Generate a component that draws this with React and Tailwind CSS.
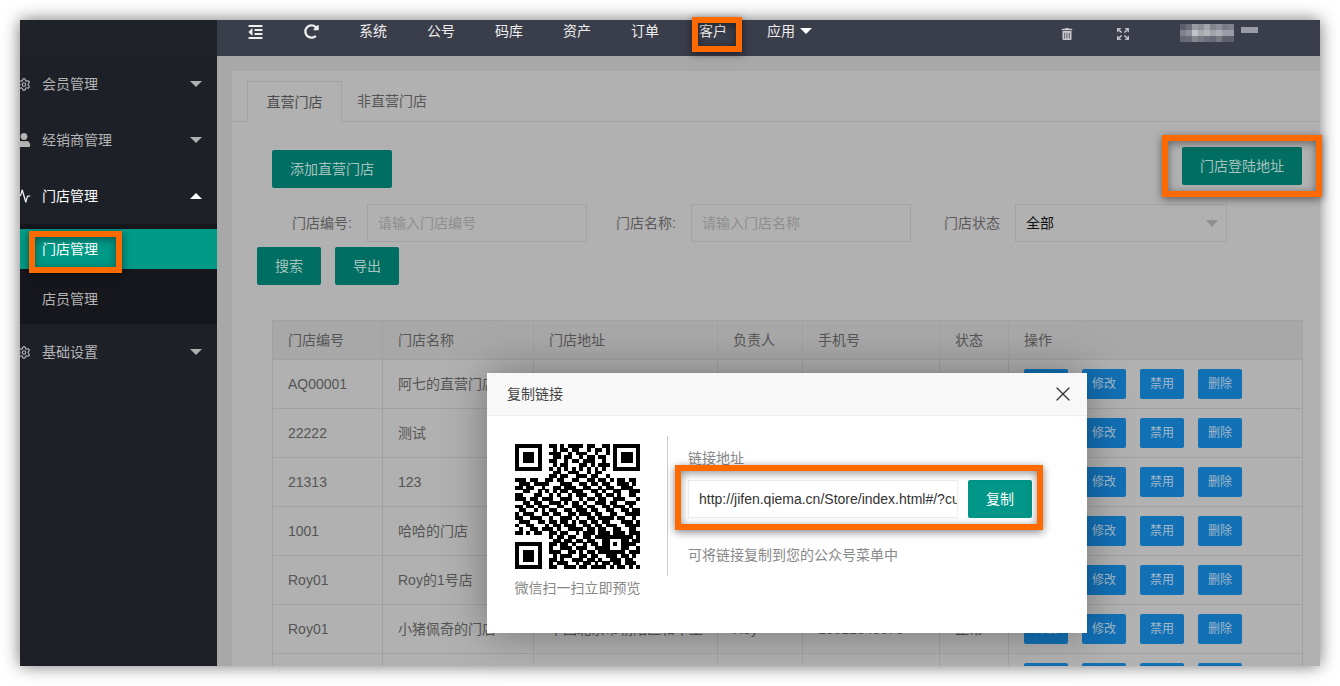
import { Settings, Activity, X, Expand } from 'lucide-react'
import { FaUser, FaOutdent, FaRedoAlt, FaTrashAlt } from 'react-icons/fa'

const FONT = 'font-["Liberation_Sans","Noto_Sans_CJK_SC",sans-serif]'

const QR_ROWS = [
  '000000000110101111011001100000000',
  '000000000010110110010110100000000',
  '000000000111001011100100110000000',
  '000000000011011001011011000000000',
  '000000000110010110111001010000000',
  '000000000010110001101011100000000',
  '000000000101010101010101000000000',
  '000000000011001110010110000000000',
  '000000000110110011101100100000000',
  '111011001101100110011011010110110',
  '011101111000111001101101100111010',
  '110110010011011100110010110011100',
  '001100101010110111001101001100111',
  '110001100101001011100110110100110',
  '111011011100111001011011001110001',
  '001101100111010110100111011001110',
  '110110111001100111011001101110100',
  '011001010110011011101100110011011',
  '101110011011001101110110011001111',
  '110011100100111010011011110110010',
  '011100110110110101101101100011101',
  '100110001011011100110110111001111',
  '010011011101001111011011001100110',
  '110101100110110010111011101110111',
  '000000000101101100110111000001101',
  '000000000011011011011001000001011',
  '000000000110110100101101000001110',
  '000000000100111011100111000001001',
  '000000000111001101011011000000111',
  '000000000010111001101100111011010',
  '000000000110100111011010011101100',
  '000000000101110010110101101101110',
  '000000000110011101101111010110101',
]

function qrCell(r, c) {
  const finder = (x, y) => {
    if (x < 0 || y < 0 || x > 7 || y > 7) return null
    if (x === 7 || y === 7) return false
    return x === 0 || x === 6 || y === 0 || y === 6 || (x >= 2 && x <= 4 && y >= 2 && y <= 4)
  }
  const a = finder(c, r)
  if (a !== null) return a
  const b = finder(32 - c, r)
  if (b !== null) return b
  const d = finder(c, 32 - r)
  if (d !== null) return d
  // alignment block, bottom right
  if (r >= 24 && r <= 28 && c >= 24 && c <= 28) {
    return r === 24 || r === 28 || c === 24 || c === 28 || (r === 26 && c === 26)
  }
  return QR_ROWS[r][c] === '1'
}

function QrCode() {
  const cells = []
  for (let r = 0; r < 33; r++) {
    for (let c = 0; c < 33; c++) {
      if (qrCell(r, c)) cells.push(<rect key={r + '-' + c} x={c} y={r} width="1.02" height="1.02" fill="#000" />)
    }
  }
  return (
    <svg width="125" height="125" viewBox="0 0 33 33" shapeRendering="crispEdges">
      {cells}
    </svg>
  )
}

// pixelated user name in the top bar
function Mosaic() {
  const cols = [
    ['#5c5f6b', '#7f818b', '#666975'],
    ['#6b6d78', '#8f909a', '#6a6c77'],
    ['#9a9ba3', '#c2c3c8', '#82848e'],
    ['#8d8e97', '#a9aab1', '#777983'],
    ['#a4a5ac', '#b3b4ba', '#6f717c'],
    ['#82848e', '#a1a2aa', '#676974'],
    ['#8f909a', '#adaeb5', '#777983'],
    ['#787a85', '#9c9da5', '#5e606c'],
    ['#7f818b', '#9a9ba3', '#5e606c'],
  ]
  return (
    <svg width="67" height="18" viewBox="0 0 9 3" shapeRendering="crispEdges">
      {cols.map((col, x) => col.map((fill, y) => (
        <rect key={x + '-' + y} x={x} y={y} width="1" height="1" fill={fill} />
      )))}
    </svg>
  )
}

function Caret({ up, dim }) {
  return (
    <span
      className={
        up
          ? 'block w-0 h-0 border-x-[6px] border-x-transparent border-b-[6px] border-b-white'
          : dim
            ? 'block w-0 h-0 border-x-[6px] border-x-transparent border-t-[6px] border-t-[#b0b0b0]'
            : 'block w-0 h-0 border-x-[6px] border-x-transparent border-t-[6px] border-t-white'
      }
    />
  )
}

function MenuItem({ icon, label, open }) {
  return (
    <div className={'h-[56px] flex items-center shrink-0 ' + (open ? 'text-white' : 'text-[#b4b4b4]')}>
      <span className="w-[14px] -ml-[3px] mr-[11px] flex justify-center">{icon}</span>
      <span className="flex-1 text-sm">{label}</span>
      <span className="mr-[15px]"><Caret up={open} dim={!open} /></span>
    </div>
  )
}

function Sidebar() {
  return (
    <div className="w-[197px] shrink-0 bg-[#1e2028] flex flex-col">
      <div className="h-[36px] bg-[#202229] shrink-0" />
      <MenuItem icon={<Settings size={15} />} label="会员管理" />
      <MenuItem icon={<FaUser size={14} />} label="经销商管理" />
      <MenuItem icon={<Activity size={14} />} label="门店管理" open />
      <div className="bg-[#16171c] shrink-0 h-[100px]">
        <div className="h-[5px]" />
        <div className="h-[40px] bg-[#009a87] flex items-center pl-[22px] text-sm text-white">门店管理</div>
        <div className="h-[5px]" />
        <div className="h-[50px] flex items-center pl-[22px] text-sm text-[#b4b4b4]">店员管理</div>
      </div>
      <MenuItem icon={<Settings size={15} />} label="基础设置" />
    </div>
  )
}

function TopBar() {
  const links = ['系统', '公号', '码库', '资产', '订单', '客户']
  return (
    <div className="h-[36px] shrink-0 bg-[#3a3d4a] flex items-start pt-[1px] pl-[30px] pr-[62px] text-[#eeeeee] text-sm">
      <div className="flex items-center gap-[40px] h-[21px]">
        <FaOutdent size={16} className="w-[17px]" />
        <FaRedoAlt size={15} />
        {links.map(l => <span key={l} className="mb-[2px]">{l}</span>)}
        <span className="flex items-center gap-[5px] mb-[2px]">应用<Caret /></span>
      </div>
      <div className="ml-auto flex items-center h-[23px]">
        <FaTrashAlt size={12} className="text-[#c8c8cc] mt-[2px]" />
        <Expand size={14} className="ml-[43px] mt-[2px] text-[#d8d8dc]" />
        <span className="ml-[43px]"><Mosaic /></span>
        <span className="block w-[17px] h-[6px] bg-[#9a9ca5] ml-[1px] mb-[6px]" />
      </div>
    </div>
  )
}

const ROWS = [
  ['AQ00001', '阿七的直营门店', '北京市朝阳区', 'Roy', '18512345678', '正常'],
  ['22222', '测试', '北京市海淀区', 'Roy', '18512345678', '正常'],
  ['21313', '123', '北京市东城区', 'Roy', '18512345678', '正常'],
  ['1001', '哈哈的门店', '北京市西城区', 'Roy', '18512345678', '正常'],
  ['Roy01', 'Roy的1号店', '北京市丰台区', 'Roy', '18512345678', '正常'],
  ['Roy01', '小猪佩奇的门店', '中国北京市朝阳区和平里', 'Roy', '18512345678', '正常'],
  ['', '', '', '', '', ''],
]

function ActionButton({ children }) {
  return (
    <button className="w-[44px] h-[30px] shrink-0 rounded-[2px] bg-[#1270b5] text-[#a3b9c9] text-xs">{children}</button>
  )
}

function StoreTable() {
  const cell = 'border border-[#a2a2a2] px-[15px] align-middle font-normal text-left'
  return (
    <table className="w-[1030px] table-fixed border-collapse text-sm text-[#555555]">
      <colgroup>
        <col className="w-[110px]" />
        <col className="w-[151px]" />
        <col className="w-[184px]" />
        <col className="w-[85px]" />
        <col className="w-[137px]" />
        <col className="w-[69px]" />
        <col className="w-[294px]" />
      </colgroup>
      <thead>
        <tr className="h-[39px] bg-[#a8a8a8]">
          {['门店编号', '门店名称', '门店地址', '负责人', '手机号', '状态', '操作'].map(h => (
            <th key={h} className={cell}>{h}</th>
          ))}
        </tr>
      </thead>
      <tbody>
        {ROWS.map((row, i) => (
          <tr key={i} className="h-[49px]">
            {row.map((v, j) => <td key={j} className={cell + ' whitespace-nowrap overflow-hidden'}>{v}</td>)}
            <td className={cell}>
              {/* last row is cut by the window, only the button tops show */}
              {row[0] ? (
                <div className="flex gap-[14px]">
                  <ActionButton>详情</ActionButton>
                  <ActionButton>修改</ActionButton>
                  <ActionButton>禁用</ActionButton>
                  <ActionButton>删除</ActionButton>
                </div>
              ) : (
                <div className="flex gap-[14px]">
                  <ActionButton />
                  <ActionButton />
                  <ActionButton />
                  <ActionButton />
                </div>
              )}
            </td>
          </tr>
        ))}
      </tbody>
    </table>
  )
}

function Field({ label, placeholder }) {
  return (
    <>
      <label className="w-[80px] shrink-0 text-right text-sm text-[#5a5a5a]">{label}</label>
      <div className="w-[220px] h-[38px] ml-[15px] shrink-0 border border-[#a4a4a4] flex items-center pl-[10px] text-sm text-[#8e8e8e]">
        {placeholder}
      </div>
    </>
  )
}

function Content() {
  return (
    <div className="flex-1 min-h-0 bg-[#a8a8a8] pt-[15px] pl-[15px]">
      <div className="h-full bg-[#b1b1b1] overflow-hidden pt-[10px]">
        <div className="flex h-[41px] border-b border-[#a2a2a2] text-sm pl-[15px]">
          <div className="w-[95px] h-[41px] border border-[#a2a2a2] border-b-[#b1b1b1] flex items-center justify-center text-[#4a4a4a]">直营门店</div>
          <div className="px-[15px] flex items-center text-[#555555]">非直营门店</div>
        </div>
        <div className="relative pl-[40px] pt-[28px]">
          <button className="block w-[120px] h-[38px] rounded-[2px] bg-[#006e62] text-sm text-[#a5c3bf]">添加直营门店</button>
          <button className="absolute top-[25px] right-[18px] w-[120px] h-[38px] rounded-[2px] bg-[#006e62] text-sm text-[#a5c3bf]">门店登陆地址</button>
        </div>
        <div className="flex items-center mt-[16px] pl-[40px]">
          <Field label="门店编号:" placeholder="请输入门店编号" />
          <span className="w-[9px] shrink-0" />
          <Field label="门店名称:" placeholder="请输入门店名称" />
          <span className="w-[9px] shrink-0" />
          <label className="w-[80px] shrink-0 text-right text-sm text-[#5a5a5a]">门店状态</label>
          <div className="w-[212px] h-[38px] ml-[15px] shrink-0 border border-[#a4a4a4] flex items-center justify-between pl-[10px] pr-[8px] text-sm text-[#111111]">
            全部
            <span className="block w-0 h-0 border-x-[6px] border-x-transparent border-t-[7px] border-t-[#8e8e8e]" />
          </div>
        </div>
        <div className="flex gap-[14px] mt-[5px] pl-[25px]">
          <button className="w-[64px] h-[38px] rounded-[2px] bg-[#006e62] text-sm text-[#a5c3bf]">搜索</button>
          <button className="w-[64px] h-[38px] rounded-[2px] bg-[#006e62] text-sm text-[#a5c3bf]">导出</button>
        </div>
        <div className="mt-[35px] pl-[40px]">
          <StoreTable />
        </div>
      </div>
    </div>
  )
}

function CopyLinkModal() {
  return (
    <div className="absolute left-[487px] top-[373px] w-[600px] h-[260px] bg-white shadow-[0_0_40px_rgba(0,0,0,0.35)] flex flex-col">
      <div className="h-[43px] shrink-0 bg-[#f8f8f8] border-b border-[#eeeeee] flex items-center justify-between pl-[20px] pr-[12px] text-sm text-[#444444]">
        复制链接
        <X size={24} strokeWidth={1.25} className="text-[#333333]" />
      </div>
      <div className="flex-1 flex items-start pt-[20px] pl-[27px]">
        <div className="w-[127px] shrink-0 pt-[8px] flex flex-col items-center">
          <QrCode />
          <span className="mt-[9px] text-sm text-[#888888] whitespace-nowrap">微信扫一扫立即预览</span>
        </div>
        <div className="ml-[26px] w-px h-[140px] bg-[#cccccc] shrink-0" />
        <div className="ml-[20px] flex-1 text-sm">
          <div className="h-[21px] mt-[12px] text-[#888888]">链接地址</div>
          <div className="flex items-center gap-[10px] mt-[11px]">
            <div className="w-[270px] h-[38px] border border-[#eeeeee] px-[10px] flex items-center overflow-hidden whitespace-nowrap text-[#333333]">
              http://jifen.qiema.cn/Store/index.html#/?customer=1
            </div>
            <button className="w-[64px] h-[38px] rounded-[2px] bg-[#009688] text-white">复制</button>
          </div>
          <div className="mt-[27px] text-[#888888]">可将链接复制到您的公众号菜单中</div>
        </div>
      </div>
    </div>
  )
}

// orange annotation drawn over the screenshot
function Mark({ className }) {
  return (
    <div className={'absolute border-[6px] border-[#ff6a00] shadow-[0_2px_8px_rgba(0,0,0,0.5),inset_0_2px_8px_rgba(0,0,0,0.45)] ' + className} />
  )
}

export default function App() {
  return (
    <div className={'relative w-[1340px] h-[686px] bg-white p-[20px] overflow-hidden ' + FONT}>
      <div className="w-[1300px] h-[646px] flex overflow-hidden shadow-[0_0_16px_rgba(0,0,0,0.55)]">
        <Sidebar />
        <div className="flex-1 min-w-0 flex flex-col">
          <TopBar />
          <Content />
        </div>
      </div>
      <CopyLinkModal />
      <Mark className="left-[692px] top-[17px] w-[50px] h-[35px]" />
      <Mark className="left-[29px] top-[231px] w-[93px] h-[42px]" />
      <Mark className="left-[1162px] top-[135px] w-[160px] h-[62px]" />
      <Mark className="left-[675px] top-[465px] w-[368px] h-[65px]" />
    </div>
  )
}
